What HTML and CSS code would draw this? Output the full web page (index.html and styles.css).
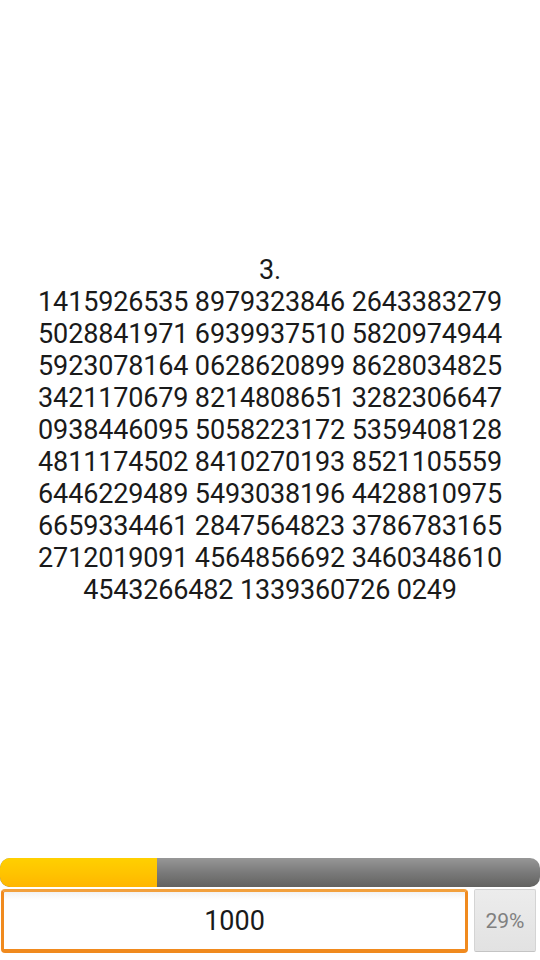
FILE: index.html
```html
<!DOCTYPE html>
<html>
<head>
<meta charset="utf-8">
<link rel="stylesheet" href="styles.css">
</head>
<body>
<div class="app">
  <div class="main">
    <div class="digits">
      <div>3.</div>
      <div>1415926535 8979323846 2643383279</div>
      <div>5028841971 6939937510 5820974944</div>
      <div>5923078164 0628620899 8628034825</div>
      <div>3421170679 8214808651 3282306647</div>
      <div>0938446095 5058223172 5359408128</div>
      <div>4811174502 8410270193 8521105559</div>
      <div>6446229489 5493038196 4428810975</div>
      <div>6659334461 2847564823 3786783165</div>
      <div>2712019091 4564856692 3460348610</div>
      <div>4543266482 1339360726 0249</div>
    </div>
  </div>
  <div class="bar"><div class="fill" style="width:29%"></div></div>
  <div class="controls">
    <div class="input">1000</div>
    <div class="btn">29%</div>
  </div>
</div>
</body>
</html>
```
FILE: styles.css
```css
html, body {
  margin: 0;
  padding: 0;
  background: #ffffff;
}
.app {
  width: 540px;
  height: 960px;
  display: flex;
  flex-direction: column;
  font-family: Roboto, "Noto Sans", sans-serif;
}
.main {
  flex: 1;
  display: flex;
  align-items: center;
  justify-content: center;
}
.digits {
  text-align: center;
  font-size: 27px;
  line-height: 32px;
  letter-spacing: -0.15px;
  color: #1a1a1a;
  margin-top: 2px;
}
.bar {
  height: 29px;
  margin: 0 0 2px 0;
  border-radius: 10px;
  overflow: hidden;
  background: linear-gradient(to bottom, #979797 0%, #7a7a7a 50%, #626260 100%);
  display: flex;
}
.fill {
  height: 100%;
  background: linear-gradient(to bottom, #ffd000 0%, #ffc400 50%, #ffb600 100%);
}
.controls {
  display: flex;
  gap: 6px;
  height: 64px;
  margin-bottom: 7px;
}
.input {
  width: 467px;
  box-sizing: border-box;
  border: 3px solid #f08a1e;
  border-top-color: #f2a03c;
  border-bottom-width: 4px;
  border-radius: 4px;
  background: linear-gradient(to bottom, #f2f2f2 0px, #ffffff 8px);
  display: flex;
  align-items: center;
  justify-content: center;
  font-size: 27px;
  color: #1a1a1a;
  margin-left: 1px;
}
.btn {
  width: 62px;
  box-sizing: border-box;
  border: 1px solid #d4d4d4;
  border-bottom-color: #c4c4c4;
  border-radius: 2px;
  background: linear-gradient(to bottom, #ececec, #e2e2e2);
  display: flex;
  align-items: center;
  justify-content: center;
  font-size: 21px;
  color: #808080;
  margin-bottom: 1px;
}
```
